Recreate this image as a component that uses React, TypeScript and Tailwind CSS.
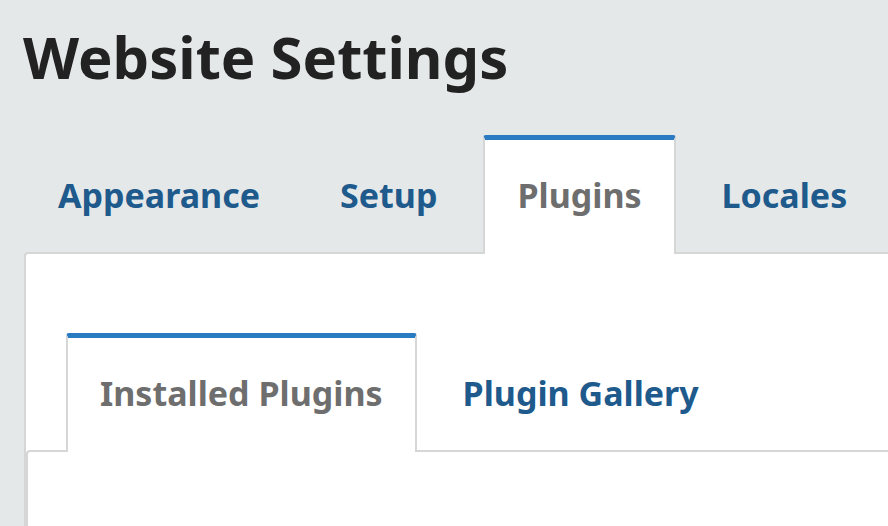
const OUTER_TABS = [
  { label: "Appearance", active: false },
  { label: "Setup", active: false },
  { label: "Plugins", active: true },
  { label: "Locales", active: false },
];

const INNER_TABS = [
  { label: "Installed Plugins", active: true },
  { label: "Plugin Gallery", active: false },
];

function Tab({ label, active }: { label: string; active: boolean }) {
  return (
    <div
      className={`relative -mb-[2px] flex h-[119px] items-center px-[32px] pb-[4px] text-[34px] font-bold leading-none ${
        active
          ? "border-x-2 border-t-[5px] border-x-[#d6d6d6] border-t-[#2b7bc2] bg-white text-[#6e6e6e] rounded-t-[3px]"
          : "border-x-2 border-t-[5px] border-transparent text-[#1e5a8c]"
      }`}
    >
      {label}
    </div>
  );
}

export default function App() {
  return (
    <div className="h-[526px] w-[888px] overflow-hidden bg-[#e5e8e9] font-['Noto_Sans',sans-serif]">
      <h1 className="pl-[23px] pt-[18px] text-[58px] font-bold leading-[78px] text-[#222222]">
        Website Settings
      </h1>

      {/* Outer tabs */}
      <div className="mt-[39px] flex gap-[12px] pl-[24px]">
        {OUTER_TABS.map(t => (
          <Tab key={t.label} {...t} />
        ))}
      </div>

      <div className="ml-[24px] h-[300px] rounded-tl-[4px] border-l-2 border-t-2 border-[#d6d6d6] bg-white pt-[79px]">
        {/* Inner tabs */}
        <div className="flex gap-[12px] pl-[40px]">
          {INNER_TABS.map(t => (
            <Tab key={t.label} {...t} />
          ))}
        </div>
        <div className="h-[100px] rounded-tl-[4px] border-l-2 border-t-2 border-[#d6d6d6] bg-white" />
      </div>
    </div>
  );
}
